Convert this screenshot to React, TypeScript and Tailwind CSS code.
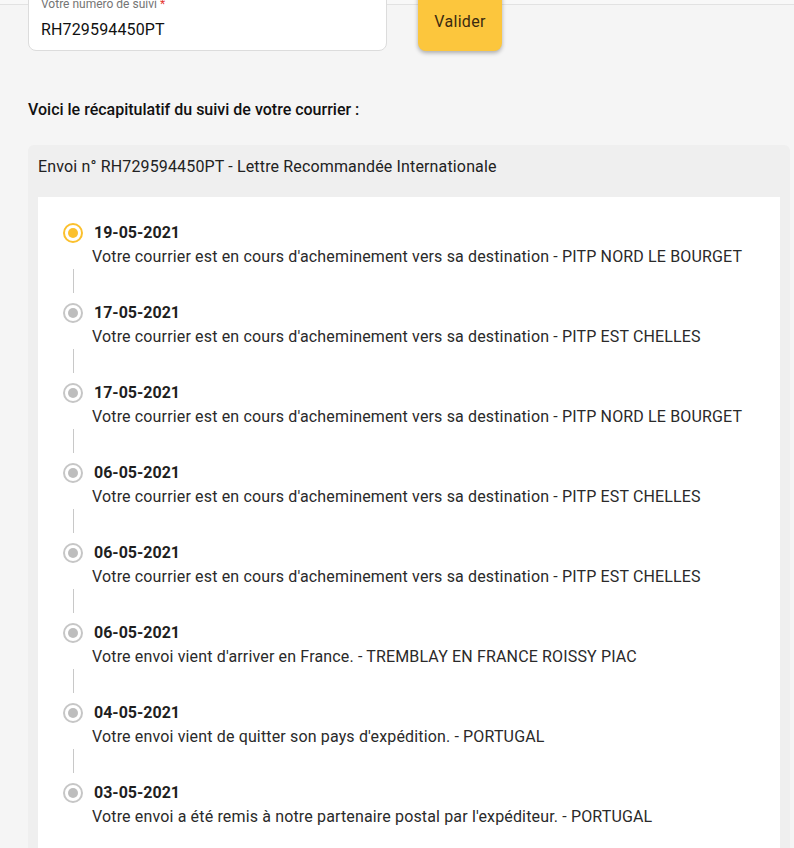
import React from "react";

const EVENTS = [
  { date: "19-05-2021", text: "Votre courrier est en cours d'acheminement vers sa destination - PITP NORD LE BOURGET", active: true },
  { date: "17-05-2021", text: "Votre courrier est en cours d'acheminement vers sa destination - PITP EST CHELLES" },
  { date: "17-05-2021", text: "Votre courrier est en cours d'acheminement vers sa destination - PITP NORD LE BOURGET" },
  { date: "06-05-2021", text: "Votre courrier est en cours d'acheminement vers sa destination - PITP EST CHELLES" },
  { date: "06-05-2021", text: "Votre courrier est en cours d'acheminement vers sa destination - PITP EST CHELLES" },
  { date: "06-05-2021", text: "Votre envoi vient d'arriver en France. - TREMBLAY EN FRANCE ROISSY PIAC" },
  { date: "04-05-2021", text: "Votre envoi vient de quitter son pays d'expédition. - PORTUGAL" },
  { date: "03-05-2021", text: "Votre envoi a été remis à notre partenaire postal par l'expéditeur. - PORTUGAL" },
];

function Dot({ active }: { active?: boolean }) {
  return (
    <div
      className={`w-[20px] h-[20px] rounded-full border-2 flex items-center justify-center bg-white ${
        active ? "border-[#fbc02d]" : "border-[#c6c6c6]"
      }`}
    >
      <div
        className={`w-[10px] h-[10px] rounded-full ${
          active ? "bg-[#fbc02d]" : "bg-[#bdbdbd]"
        }`}
      />
    </div>
  );
}

export default function App() {
  return (
    <div
      className="min-h-[848px] bg-[#f5f5f5] overflow-hidden"
      style={{ fontFamily: "Roboto, 'Liberation Sans', sans-serif" }}
    >
      {/* top strip */}
      <div className="h-[5px] bg-[#f8f8f8] border-b border-[#e2e2e2]" />

      {/* search form */}
      <div className="relative flex items-start gap-[31px] pl-[28px] -mt-[17px]">
        <div className="w-[359px] h-[63px] bg-white border border-[#dcdcdc] rounded-lg px-[12px] pt-[7px]">
          <div className="text-[12px] leading-4 text-[#757575]">
            Votre numéro de suivi <span className="text-[#e53935]">*</span>
          </div>
          <div className="text-[16px] leading-6 tracking-[0.15px] text-[#111] mt-[6px]">RH729594450PT</div>
        </div>
        <button className="w-[84px] h-[63px] bg-[#fcc63d] rounded-lg shadow-[0_2px_4px_rgba(0,0,0,0.3)] text-[16px] tracking-[0.3px] text-[#3b2a10] pt-[4px]">
          Valider
        </button>
      </div>

      {/* summary title */}
      <div className="pl-[28px] mt-[47px] text-[16px] leading-6 font-medium text-[#111]">
        Voici le récapitulatif du suivi de votre courrier :
      </div>

      {/* card */}
      <div className="ml-[28px] mr-[4px] mt-[23px] bg-[#efefef] rounded-md px-[10px]">
        <div className="pt-[10px] pb-[18px] text-[16px] leading-6 tracking-[0.15px] text-[#222]">
          Envoi n° RH729594450PT - Lettre Recommandée Internationale
        </div>
        <div className="bg-white pl-[25px] pt-[24px] pb-[40px]">
          {EVENTS.map((ev, i) => (
            <div key={i}>
              <div className="flex gap-[9px]">
                <div className="h-6 flex items-center">
                  <Dot active={ev.active} />
                </div>
                <div className="flex flex-col">
                  <div className="text-[16px] leading-6 font-bold text-[#1f1f1f] pl-[2px]">{ev.date}</div>
                  <div className="text-[16px] leading-6 tracking-[0.15px] text-[#2a2a2a]">{ev.text}</div>
                </div>
              </div>
              {i < EVENTS.length - 1 && (
                <div className="h-[32px] pl-[10px]">
                  <div className="w-px h-[24px] bg-[#c8c8c8]" />
                </div>
              )}
            </div>
          ))}
        </div>
      </div>
    </div>
  );
}
